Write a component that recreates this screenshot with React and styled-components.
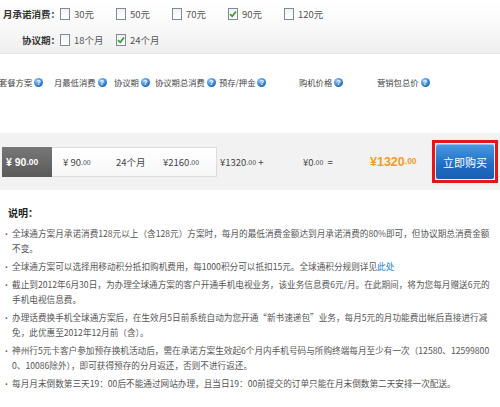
import React from 'react'
import styled, { createGlobalStyle } from 'styled-components'

const Global = createGlobalStyle`
  body {
    margin: 0;
    background: #fff;
    font-family: "Noto Sans CJK SC", "Liberation Sans", sans-serif;
    color: #333;
  }
`

const amounts = ['30元', '50元', '70元', '90元', '120元']
const periods = ['18个月', '24个月']

const heads = [
  { t: '套餐方案', w: 55 },
  { t: '月最低消费', w: 60 },
  { t: '协议期', w: 41 },
  { t: '协议期总消费', w: 64 },
  { t: '预存/押金', w: 80 },
  { t: '购机价格', w: 78 },
  { t: '营销包总价', w: 80 },
]

const notes = [
  { t: '全球通方案月承诺消费128元以上（含128元）方案时，每月的最低消费金额达到月承诺消费的80%即可，但协议期总消费金额不变。' },
  { t: '全球通方案可以选择用移动积分抵扣购机费用，每1000积分可以抵扣15元。全球通积分规则详见', link: '此处' },
  { t: '截止到2012年6月30日，为办理全球通方案的客户开通手机电视业务，该业务信息费6元/月。在此期间，将为您每月赠送6元的手机电视信息费。' },
  { t: '办理话费换手机全球通方案后，在生效月5日前系统自动为您开通“新书速递包”业务，每月5元的月功能费出帐后直接进行减免，此优惠至2012年12月前（含）。' },
  { t: '神州行5元卡客户参加预存换机活动后，需在承诺方案生效起6个月内手机号码与所购终端每月至少有一次（12580、125998000、10086除外），即可获得预存的分月返还，否则不进行返还。' },
  { t: '每月月末倒数第三天19：00后不能通过网站办理，且当日19：00前提交的订单只能在月末倒数第二天安排一次配送。' },
]

const Check = ({ on }) => (
  <Box>
    {on && (
      <svg width="8" height="8" viewBox="0 0 8 8">
        <path d="M1 4.2 L3.2 6.3 L7 1.5" fill="none" stroke="#2c9a2c" strokeWidth="1.6" />
      </svg>
    )}
  </Box>
)

const Help = () => <HelpIcon>?</HelpIcon>

const Money = ({ v, small }) => {
  const [a, b] = v.split('.')
  return (
    <>
      {a}<Dec small={small}>.{b}</Dec>
    </>
  )
}

export default function App() {
  return (
    <>
      <Global />
      <Filters>
        <FilterRow>
          <FLabel>月承诺消费：</FLabel>
          {amounts.map((a) => (
            <Opt key={a}><Check on={a === '90元'} />{a}</Opt>
          ))}
        </FilterRow>
        <FilterRow>
          <FLabel>协议期：</FLabel>
          {periods.map((p) => (
            <Opt key={p}><Check on={p === '24个月'} />{p}</Opt>
          ))}
        </FilterRow>
      </Filters>

      <Heads>
        {heads.map((h) => (
          <Head key={h.t} w={h.w}>{h.t}<Help /></Head>
        ))}
      </Heads>

      <Band>
        <Dark>¥ <Money v="90.00" /></Dark>
        <WhiteBox>
          <Cell w={53}>¥ <Money v="90.00" small /></Cell>
          <Cell w={47}>24个月</Cell>
          <Cell w={50}>¥<Money v="2160.00" small /></Cell>
        </WhiteBox>
        <Plain w={83}>¥<Money v="1320.00" small /> +</Plain>
        <Plain w={67}>¥<Money v="0.00" small /> &nbsp;=</Plain>
        <Total>¥1320<Dec>.00</Dec></Total>
        <Frame>
          <Buy>立即购买</Buy>
        </Frame>
      </Band>

      <Notes>
        <NTitle>说明：</NTitle>
        {notes.map((n, i) => (
          <Note key={i}>
            {n.t}
            {n.link && <Link>{n.link}</Link>}
          </Note>
        ))}
      </Notes>
    </>
  )
}

const Filters = styled.div`
  height: 54px;
  box-sizing: border-box;
  padding-top: 5px;
  background: linear-gradient(#fff 0%, #fbfbfb 40%, #efefef 100%);
  border-bottom: 1px solid #e6e6e6;
`

const FilterRow = styled.div`
  display: flex;
  align-items: center;
  height: 17px;
  margin-bottom: 9px;
`

const FLabel = styled.div`
  width: 60px;
  text-align: right;
  font-size: 9.5px;
  font-weight: bold;
  color: #333;
  white-space: nowrap;
`

const Opt = styled.div`
  width: 56px;
  display: flex;
  align-items: center;
  font-size: 9.5px;
  color: #555;
`

const Box = styled.span`
  width: 8px;
  height: 10px;
  border: 1px solid #7d8a99;
  background: linear-gradient(#f2f2f2, #fff);
  margin-right: 4px;
  display: flex;
  align-items: center;
  justify-content: center;
`

const Heads = styled.div`
  display: flex;
  align-items: flex-start;
  height: 79px;
  padding-top: 22px;
  box-sizing: border-box;
`

const Head = styled.div`
  width: ${(p) => p.w}px;
  flex-shrink: 0;
  display: flex;
  align-items: center;
  font-size: 8.3px;
  color: #444;
  white-space: nowrap;
  &:first-child {
    margin-left: -1px;
  }
`

const HelpIcon = styled.span`
  width: 9px;
  height: 9px;
  border-radius: 50%;
  margin-left: 2px;
  background: radial-gradient(circle at 35% 30%, #9ccbf5, #1e6fc7 70%);
  color: #fff;
  font-size: 7px;
  font-weight: bold;
  display: flex;
  align-items: center;
  justify-content: center;
  line-height: 1;
  font-family: "Liberation Sans", sans-serif;
`

const Band = styled.div`
  height: 57px;
  background: #f2f2f2;
  display: flex;
  align-items: center;
  padding-left: 2px;
`

const Dark = styled.div`
  width: 50px;
  height: 30px;
  flex-shrink: 0;
  box-sizing: border-box;
  background: linear-gradient(#777, #5a5a5a);
  color: #fff;
  font-size: 10.5px;
  font-weight: bold;
  display: flex;
  align-items: center;
  padding-left: 4px;
  white-space: pre;
  font-family: "Liberation Sans", "Noto Sans CJK SC", sans-serif;
`

const Dec = styled.span`
  font-size: ${(p) => (p.small ? '7px' : '8.5px')};
  vertical-align: ${(p) => (p.small ? '1px' : '2px')};
`

const WhiteBox = styled.div`
  width: 165px;
  height: 30px;
  flex-shrink: 0;
  box-sizing: border-box;
  background: linear-gradient(#fff, #f7f7f7);
  border: 1px solid #ddd;
  border-left: none;
  display: flex;
  align-items: center;
  padding-left: 11px;
`

const Cell = styled.div`
  width: ${(p) => p.w}px;
  flex-shrink: 0;
  font-size: 9.5px;
  color: #444;
  white-space: pre;
`

const Plain = styled.div`
  width: ${(p) => p.w}px;
  flex-shrink: 0;
  font-size: 9.5px;
  color: #444;
  white-space: pre;
  padding-left: 3px;
  box-sizing: border-box;
`

const Total = styled.div`
  width: 63px;
  flex-shrink: 0;
  box-sizing: border-box;
  padding-left: 3px;
  color: #f39c1c;
  font-weight: bold;
  font-size: 12.5px;
  font-family: "Liberation Sans", "Noto Sans CJK SC", sans-serif;
`

const Frame = styled.div`
  width: 66px;
  height: 43px;
  flex-shrink: 0;
  margin-left: 2px;
  box-sizing: border-box;
  border: 3px solid #e8141b;
  padding: 1px;
  display: flex;
`

const Buy = styled.div`
  flex: 1;
  background: linear-gradient(#4a9be3, #1e6cc4 60%, #1a5fb0);
  border-radius: 2px;
  color: #fff;
  font-size: 11px;
  display: flex;
  align-items: center;
  justify-content: center;
  box-shadow: inset 0 1px 0 rgba(255, 255, 255, 0.4);
`

const Notes = styled.div`
  padding: 16px 6px 0 4px;
`

const NTitle = styled.div`
  font-size: 10px;
  line-height: 14px;
  font-weight: bold;
  color: #222;
  margin-left: 4px;
  margin-bottom: 6px;
`

const Note = styled.div`
  font-size: 8.65px;
  line-height: 15px;
  color: #555;
  margin-bottom: 3px;
  padding-left: 8px;
  position: relative;
  word-break: break-all;
  &::before {
    content: '.';
    position: absolute;
    left: 1px;
    top: -2px;
    font-weight: bold;
  }
`

const Link = styled.span`
  color: #1a7fd8;
`
